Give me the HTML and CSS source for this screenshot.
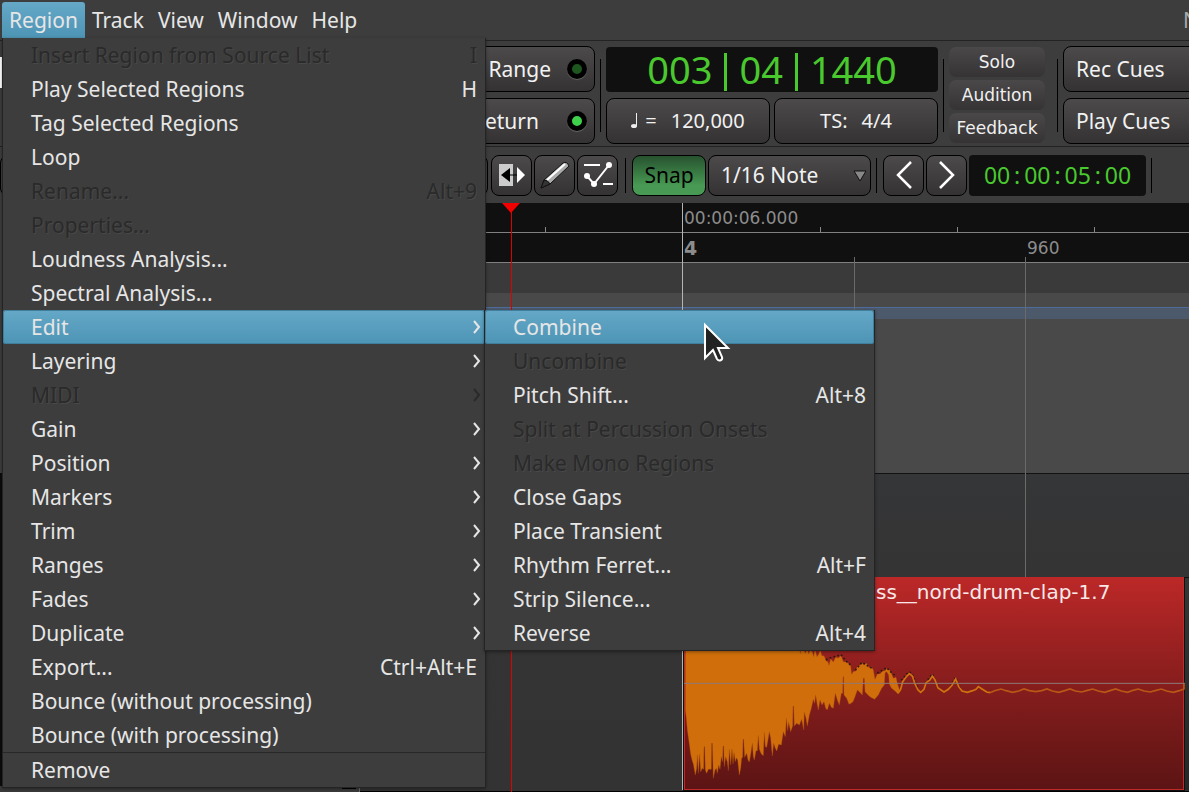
FILE: index.html
```html
<!DOCTYPE html>
<html lang="en">
<head>
<meta charset="utf-8">
<title>Editor</title>
<link rel="stylesheet" href="styles.css">
</head>
<body>
<header class="menubar">
  <nav class="menus" aria-label="Main menu">
    <button class="menubar-item active">Region</button>
    <button class="menubar-item">Track</button>
    <button class="menubar-item">View</button>
    <button class="menubar-item">Window</button>
    <button class="menubar-item">Help</button>
  </nav>
  <span class="session-edge">N</span>
</header>

<section class="transport">
  <div class="transport-left"><div class="meter"></div></div>
  <div class="stack modes">
    <button class="btn mode">Range<span class="led"></span></button>
    <button class="btn mode return">Return<span class="led on"></span></button>
  </div>
  <i class="vsep"></i>
  <div class="stack clocks">
    <div class="clock big"><span>003</span><span class="bar"></span><span>04</span><span class="bar"></span><span>1440</span></div>
    <div class="pair">
      <button class="btn info"><svg width="8" height="18" viewBox="0 0 8 18"><ellipse cx="3" cy="14" rx="3" ry="2" fill="#eee"/><path d="M5.500 14V1" stroke="#eee" stroke-width="1"/></svg><span>=</span><span>120,000</span></button>
      <button class="btn info"><span>TS:</span><span>4/4</span></button>
    </div>
  </div>
  <i class="vsep"></i>
  <div class="alerts">
    <button class="alert">Solo</button>
    <button class="alert">Audition</button>
    <button class="alert">Feedback</button>
  </div>
  <i class="vsep wide"></i>
  <div class="stack cues">
    <button class="btn cue">Rec Cues<span class="led"></span></button>
    <button class="btn cue">Play Cues<span class="led"></span></button>
  </div>
</section>

<section class="toolbar">
  <div class="toolbar-left"></div>
  <button class="btn tool" aria-label="Stretch"><svg width="28" height="28" viewBox="0 0 28 28"><path d="M1 3h14v22H1z" fill="#ccc"/><path d="M3 14l9-7v14z" fill="#000"/><path d="M12 14h7" stroke="#000"/><path d="M19 6l8 8-8 8z" fill="#fff"/></svg></button>
  <button class="btn tool" aria-label="Draw"><svg width="30" height="30" viewBox="0 0 30 30"><path d="M1 28l3-8L23 3q4-2 6 3L10 24z" fill="#aaa" stroke="#111"/><path d="M7 20L25 4" stroke="#fff" stroke-width="2"/><path d="M4 20q4 0 6 4L1 28z" fill="#333" stroke="#111"/></svg></button>
  <button class="btn tool" aria-label="Edit points"><svg width="30" height="28" viewBox="0 0 30 28"><path d="M1 4h16M20 23h10" stroke="#fff" stroke-width="2"/><path d="M4 15l7 8L26 4" fill="none" stroke="#fff" stroke-width="2"/><g fill="#fff"><circle cx="4" cy="15" r="3"/><circle cx="11" cy="23" r="3"/><circle cx="26" cy="4" r="3"/></g></svg></button>
  <i class="vsep tool-sep"></i>
  <button class="btn snap">Snap</button>
  <div class="combo"><select class="btn" aria-label="Grid"><option>1/16 Note</option></select><svg class="arrow" width="14" height="12" viewBox="0 0 14 12"><path d="M1 1h12L7 11z" fill="#888" stroke="#111"/></svg></div>
  <i class="vsep tool-sep"></i>
  <button class="btn tool" aria-label="Nudge back"><svg width="16" height="28" viewBox="0 0 16 28"><path d="M15 1L2 14l13 13" fill="none" stroke="#fff" stroke-width="2.500"/></svg></button>
  <button class="btn tool" aria-label="Nudge forward"><svg width="16" height="28" viewBox="0 0 16 28"><path d="M1 1l13 13L1 27" fill="none" stroke="#fff" stroke-width="2.500"/></svg></button>
  <div class="clock small"><span>00</span><b>:</b><span>00</span><b>:</b><span>05</span><b>:</b><span>00</span></div>
  <i class="vsep tool-sep"></i>
</section>

<main class="editor">
  <div class="headers"><div class="header-top"></div><div class="header-rest"></div><div class="header-foot"><span class="foot-box"></span></div></div>
  <div class="canvas">
    <div class="ruler"></div>
    <div class="ruler"></div>
    <div class="strip"></div>
    <div class="track one"><div class="band"></div></div>
    <div class="track two"></div>

    <i class="line bar-line"></i>
    <i class="line beat-a"></i>
    <i class="line beat-b"></i>
    <i class="tick t1"></i><i class="tick t2"></i><i class="tick t3"></i><i class="tick t4"></i>
    <span class="mark time">00:00:06.000</span>
    <span class="mark bar-no">4</span>
    <span class="mark sub">960</span>
    <div class="after"></div>
    <div class="region">
      <span class="region-name">ss__nord-drum-clap-1.7</span>
      <svg class="wave" width="501" height="213" viewBox="42 51 1503 639" preserveAspectRatio="none">
        <path fill="#cf6e0a" stroke="#a9540c" stroke-width="1" d="M46 295L50 200H350V272H355V240L388 250 391 282 394 262 400 270 407 280 411 265 416 282 421 270 427 276 431 290 435 268 441 290 446 283 451 270 456 288 462 287 468 302 474 306 477 316 482 296 490 306 497 292 505 294 513 287 520 305 528 306 536 311 542 318 545 343 551 334 556 334 562 320 570 316 576 310 583 314 590 310 597 323 604 320 610 330 615 358 622 342 630 342 637 334 645 332 650 326 658 330 664 340 670 355 678 352 682 370 688 388 684 402 676 394 664 384 658 372 656 345 650 335 645 338 643 375 635 385 625 405 614 418 602 412 594 405 585 395 583 355 580 355 577 405 568 395 562 390 555 410 549 425 543 430 537 433 530 415 522 405 521 350 519 350 518 400 514 400 508 435 502 420 496 400 490 445 484 442 478 430 472 450 467 445 462 425 456 435 450 420 445 450 441 430 437 405 434 430 430 418 424 445 418 465 412 498 408 475 403 457 401 510 395 478 388 495 380 490 373 498 371 438 369 438 368 498 362 515 356 487 353 512 349 475 346 530 340 515 334 555 326 553 320 573 316 565 311 550 307 588 302 535 298 515 294 540 290 562 286 560 283 517 280 587 274 582 268 568 265 526 262 572 258 572 253 600 250 590 247 550 243 577 238 606 234 600 230 580 224 592 221 538 219 538 218 592 215 595 212 625 208 645 203 600 199 593 196 605 192 578 189 612 186 567 182 615 178 568 175 632 172 605 167 590 163 620 161 558 159 558 158 605 154 590 150 628 146 615 142 640 139 625 135 630 130 655 127 550 125 550 124 628 115 628 110 640 106 630 104 560 102 560 101 628 97 625 92 635 89 583 85 640 82 585 80 625 76 645 70 612 66 600 62 583 57 545 52 510 49 475 46 450Z"/>
        <path fill="none" stroke="#2b1a0c" stroke-width="5" stroke-dasharray="5 7" d="M468 299L482 293 497 289 513 284 528 303 542 315M556 331L576 307 597 320 610 327M622 339L650 323 664 337 678 349M694 361L710 342 718 335 727 343 743 382M766 369L787 342 804 380M842 378L857 352 870 385"/>
        <path fill="none" stroke="#d0720e" stroke-width="5" d="M684 400L692 388 698 365 710 349 718 341 727 348 735 372 744 390 752 397 762 388 768 368 780 360 787 348 795 360 804 384 822 396 835 388 846 376 857 357 866 380 876 393 892 397 908 392 918 388 925 380 936 387 950 396 960 398"/>
        <path fill="none" stroke="#b95716" stroke-width="5" d="M960 398L974 392 993 387 1008 392 1028 397 1046 393 1062 387 1078 392 1097 395 1115 392 1131 387 1147 393 1166 397 1184 392 1200 387 1216 393 1235 396 1252 391 1268 387 1285 393 1304 397 1320 392 1337 387 1354 393 1373 397 1389 391 1405 387 1422 393 1441 396 1458 391 1474 387 1490 393 1510 397 1528 392 1542 387V372"/>
        <path d="M42 370H1545" stroke="#8f7a78" stroke-width="3"/>
      </svg>
    </div>
    <i class="playhead"></i>
    <svg class="play-flag" width="18" height="10" viewBox="0 0 18 10"><path d="M0 0h18L9 10z" fill="#f00000"/></svg>
  </div>
</main>

<ul class="menu main-menu">
  <li><button disabled><span>Insert Region from Source List</span><kbd>I</kbd></button></li>
  <li><button><span>Play Selected Regions</span><kbd>H</kbd></button></li>
  <li><button><span>Tag Selected Regions</span></button></li>
  <li><button><span>Loop</span></button></li>
  <li><button disabled><span>Rename...</span><kbd>Alt+9</kbd></button></li>
  <li><button disabled><span>Properties...</span></button></li>
  <li><button><span>Loudness Analysis...</span></button></li>
  <li><button><span>Spectral Analysis...</span></button></li>
  <li><button class="selected"><span>Edit</span><svg class="chev" viewBox="0 0 8 14"><path d="M1 1l5 6-5 6"/></svg></button></li>
  <li><button><span>Layering</span><svg class="chev" viewBox="0 0 8 14"><path d="M1 1l5 6-5 6"/></svg></button></li>
  <li><button disabled><span>MIDI</span><svg class="chev" viewBox="0 0 8 14"><path d="M1 1l5 6-5 6"/></svg></button></li>
  <li><button><span>Gain</span><svg class="chev" viewBox="0 0 8 14"><path d="M1 1l5 6-5 6"/></svg></button></li>
  <li><button><span>Position</span><svg class="chev" viewBox="0 0 8 14"><path d="M1 1l5 6-5 6"/></svg></button></li>
  <li><button><span>Markers</span><svg class="chev" viewBox="0 0 8 14"><path d="M1 1l5 6-5 6"/></svg></button></li>
  <li><button><span>Trim</span><svg class="chev" viewBox="0 0 8 14"><path d="M1 1l5 6-5 6"/></svg></button></li>
  <li><button><span>Ranges</span><svg class="chev" viewBox="0 0 8 14"><path d="M1 1l5 6-5 6"/></svg></button></li>
  <li><button><span>Fades</span><svg class="chev" viewBox="0 0 8 14"><path d="M1 1l5 6-5 6"/></svg></button></li>
  <li><button><span>Duplicate</span><svg class="chev" viewBox="0 0 8 14"><path d="M1 1l5 6-5 6"/></svg></button></li>
  <li><button><span>Export...</span><kbd>Ctrl+Alt+E</kbd></button></li>
  <li><button><span>Bounce (without processing)</span></button></li>
  <li><button><span>Bounce (with processing)</span></button></li>
  <li class="divided"><button><span>Remove</span></button></li>
</ul>

<ul class="menu sub-menu">
  <li><button class="selected"><span>Combine</span></button></li>
  <li><button disabled><span>Uncombine</span></button></li>
  <li><button><span>Pitch Shift...</span><kbd>Alt+8</kbd></button></li>
  <li><button disabled><span>Split at Percussion Onsets</span></button></li>
  <li><button disabled><span>Make Mono Regions</span></button></li>
  <li><button><span>Close Gaps</span></button></li>
  <li><button><span>Place Transient</span></button></li>
  <li><button><span>Rhythm Ferret...</span><kbd>Alt+F</kbd></button></li>
  <li><button><span>Strip Silence...</span></button></li>
  <li><button><span>Reverse</span><kbd>Alt+4</kbd></button></li>
</ul>

<svg class="cursor" width="28" height="42" viewBox="0 0 28 42"><path d="M2 3v33l8-8c2 4 3 7 4 9 2 3 6 1 5-2l-4-9h10z" fill="#222" stroke="#fff" stroke-width="2" stroke-linejoin="miter"/></svg>
</body>
</html>
```
FILE: styles.css
```css
* { box-sizing: border-box; }

body {
  margin: 0;
  min-height: 100vh;
  display: flex;
  flex-direction: column;
  position: relative;
  overflow: hidden;
  background: #3d3d3d;
  color: #e6e6e6;
  font-family: "Noto Sans", sans-serif;
  font-size: 21px;
}

button, select { font: inherit; color: inherit; margin: 0; }

.menubar {
  height: 41px;
  display: flex;
  justify-content: space-between;
  padding: 2px 0 2px 2px;
  border-bottom: 1px solid #232323;
  background: #3d3d3d;
}
.menus { display: flex; }
.menubar-item {
  padding: 0 7px;
  border: 0;
  background: none;
  line-height: 36px;
}
.menubar-item.active {
  background: linear-gradient(#65a8c8, #4d94b4);
  border-radius: 3px 3px 0 0;
}
.session-edge { width: 6px; overflow: hidden; line-height: 36px; color: #aaa; }

.btn {
  border: 1px solid #000;
  border-radius: 8px;
  background: linear-gradient(#4c4a4b, #343233);
  color: #f2f2f2;
  padding: 0;
}
.vsep { flex: none; width: 1px; height: 73px; background: #000; margin: 0 5px; align-self: center; }
.vsep.wide { margin: 0 5px 0 12px; }

.transport {
  height: 106px;
  display: flex;
  align-items: center;
  border-bottom: 1px solid #222;
  padding-top: 3px;
  overflow: hidden;
}
.transport-left { flex: 0 0 399px; }
.meter { width: 20px; height: 31px; margin-bottom: 46px; background: #fff; }
.stack { display: flex; flex-direction: column; gap: 6px; }
.modes { flex: 0 0 196px; }
.mode {
  height: 46px;
  display: flex;
  align-items: center;
  justify-content: flex-end;
  gap: 16px;
  padding-right: 7px;
}
.return { gap: 28px; }
.led {
  width: 20px;
  height: 20px;
  flex: none;
  border-radius: 50%;
  border: 5px solid #000;
  background: #1d571f;
  box-shadow: 0 1px 1px #666;
}
.led.on { background: #3fd04b; }
.clocks { flex: 0 0 332px; }
.clock {
  background: #101010;
  border-radius: 4px;
  color: #4ac92f;
  display: flex;
  align-items: center;
  justify-content: center;
}
.big { height: 45px; font-size: 38px; line-height: 44px; }
.bar { width: 3px; height: 38px; margin: 6px 12px 0; background: #4ac92f; }
.pair { display: flex; gap: 4px; }
.info {
  flex: 1;
  height: 46px;
  display: flex;
  align-items: center;
  justify-content: center;
  font-size: 20px;
}
.info span + span { margin-left: 14px; }
.info svg { margin-right: 6px; }
.alerts { flex: 0 0 96px; display: flex; flex-direction: column; gap: 3px; }
.alert {
  height: 30px;
  border: 0;
  border-radius: 7px;
  background: linear-gradient(#4a4848, #353334);
  color: #f0f0f0;
  font: 17px "DejaVu Sans", sans-serif;
  padding: 0;
}
.cues { flex: 0 0 154px; }
.cue {
  height: 46px;
  display: flex;
  align-items: center;
  justify-content: space-between;
  padding: 0 7px 0 12px;
}

.toolbar {
  height: 56px;
  display: flex;
  align-items: center;
  overflow: hidden;
}
.toolbar-left { flex: 0 0 488px; height: 41px; border: 1px solid #000; border-radius: 8px; margin-right: 3px; }
.tool {
  flex: 0 0 41px;
  height: 41px;
  margin-right: 2px;
  display: flex;
  align-items: center;
  justify-content: center;
}
.vsep.tool-sep { height: 35px; margin: 0 6px 0 5px; }
.snap {
  flex: 0 0 74px;
  height: 41px;
  background: linear-gradient(#27522f, #479953 75%);
  color: #000;
}
.combo { position: relative; flex: 0 0 163px; margin-left: 2px; }
.combo select { width: 100%; height: 41px; padding-left: 12px; appearance: none; }
.arrow { position: absolute; right: 4px; top: 15px; }
.small { flex: 0 0 177px; height: 41px; font-size: 23px; }
.small b { width: 14px; text-align: center; font-weight: normal; }

.editor { flex: 1; display: flex; min-height: 589px; }
.headers { flex: 0 0 360px; display: flex; flex-direction: column; }
.header-top { height: 270px; }
.header-rest { flex: 1; background: #0c0c0c; }
.header-foot { height: 6px; background: #3a3a3a; padding-left: 342px; border-right: 1px solid #666; }
.foot-box { display: block; width: 14px; height: 3px; border: 1px solid #000; border-top: 0; }

.canvas { flex: 1; position: relative; display: flex; flex-direction: column; overflow: hidden; }
.ruler { height: 30px; background: #101010; border-bottom: 1px solid #808080; }
.strip { height: 30px; background: #3a3a3a; }
.track.one { height: 181px; padding-top: 14px; background: #494949; border-bottom: 1px solid #111; }
.band { height: 12px; background: #4b596b; border-top: 1px solid #4d6c9c; }
.track.two { flex: 1; background: linear-gradient(#353638, #343434 100px, #333); border-bottom: 1px solid #000; }

.line { position: absolute; width: 1px; background: #6a6a6a; }
.bar-line { left: 322px; top: 0; bottom: 2px; background: #b4b4b4; }
.beat-a { left: 494px; top: 54px; height: 60px; }
.beat-b { left: 665px; top: 54px; height: 320px; }
.tick { position: absolute; top: 24px; width: 1px; height: 5px; background: #888; }
.t1 { left: 185px; }
.t2 { left: 460px; }
.t3 { left: 597px; }
.t4 { left: 734px; }
.mark { position: absolute; color: #8c8c8c; font: 17px/20px "DejaVu Sans", sans-serif; }
.time { left: 324px; top: 5px; }
.bar-no { left: 324px; top: 35px; font-size: 19px; font-weight: bold; }
.sub { left: 667px; top: 35px; }
.after { position: absolute; left: 825px; right: 0; top: 374px; height: 213px; background: linear-gradient(#333537, #262727); border-top: 1px solid #111; }
.region {
  position: absolute;
  left: 323px;
  top: 374px;
  width: 502px;
  height: 214px;
  border: 1px solid #111;
  border-top: 0;
  background: linear-gradient(#bc2828, #8c1e1e 45%, #5c1414);
  box-shadow: inset -1px -1px #c02a2a, inset 1px 0 #c02a2a;
}
.region-name { position: absolute; left: 192px; top: 4px; color: #f8e8e8; font: 20px/22px "DejaVu Sans", sans-serif; }
.wave { display: block; }
.playhead { position: absolute; left: 151px; top: 0; bottom: 0; width: 1px; background: #e00000; }
.play-flag { position: absolute; left: 142px; top: 0; }

.menu {
  position: absolute;
  margin: 0;
  padding: 0;
  list-style: none;
  background: #3d3d3d;
  border: 1px solid #242424;
  border-top: 0;
  box-shadow: 0 1px 3px #00000060;
}
.main-menu { left: 2px; top: 38px; width: 484px; }
.sub-menu { left: 484px; top: 310px; width: 391px; }
.menu button {
  width: 100%;
  height: 34px;
  display: flex;
  align-items: center;
  justify-content: space-between;
  padding: 0 8px 0 28px;
  border: 0;
  background: none;
  text-align: left;
}
.menu kbd { font: inherit; }
.menu button:disabled { color: #2a2a2a; text-shadow: 1px 1px #484848; }
.menu button.selected {
  background: linear-gradient(#65a8c8, #4d94b4);
  border-radius: 3px;
  box-shadow: inset 0 0 0 1px #407f9c;
}
.chev { width: 8px; height: 14px; margin-right: -4px; fill: none; stroke: currentColor; stroke-width: 2; }
.divided { border-top: 1px solid #282828; }

.cursor { position: absolute; left: 703px; top: 322px; }
```
